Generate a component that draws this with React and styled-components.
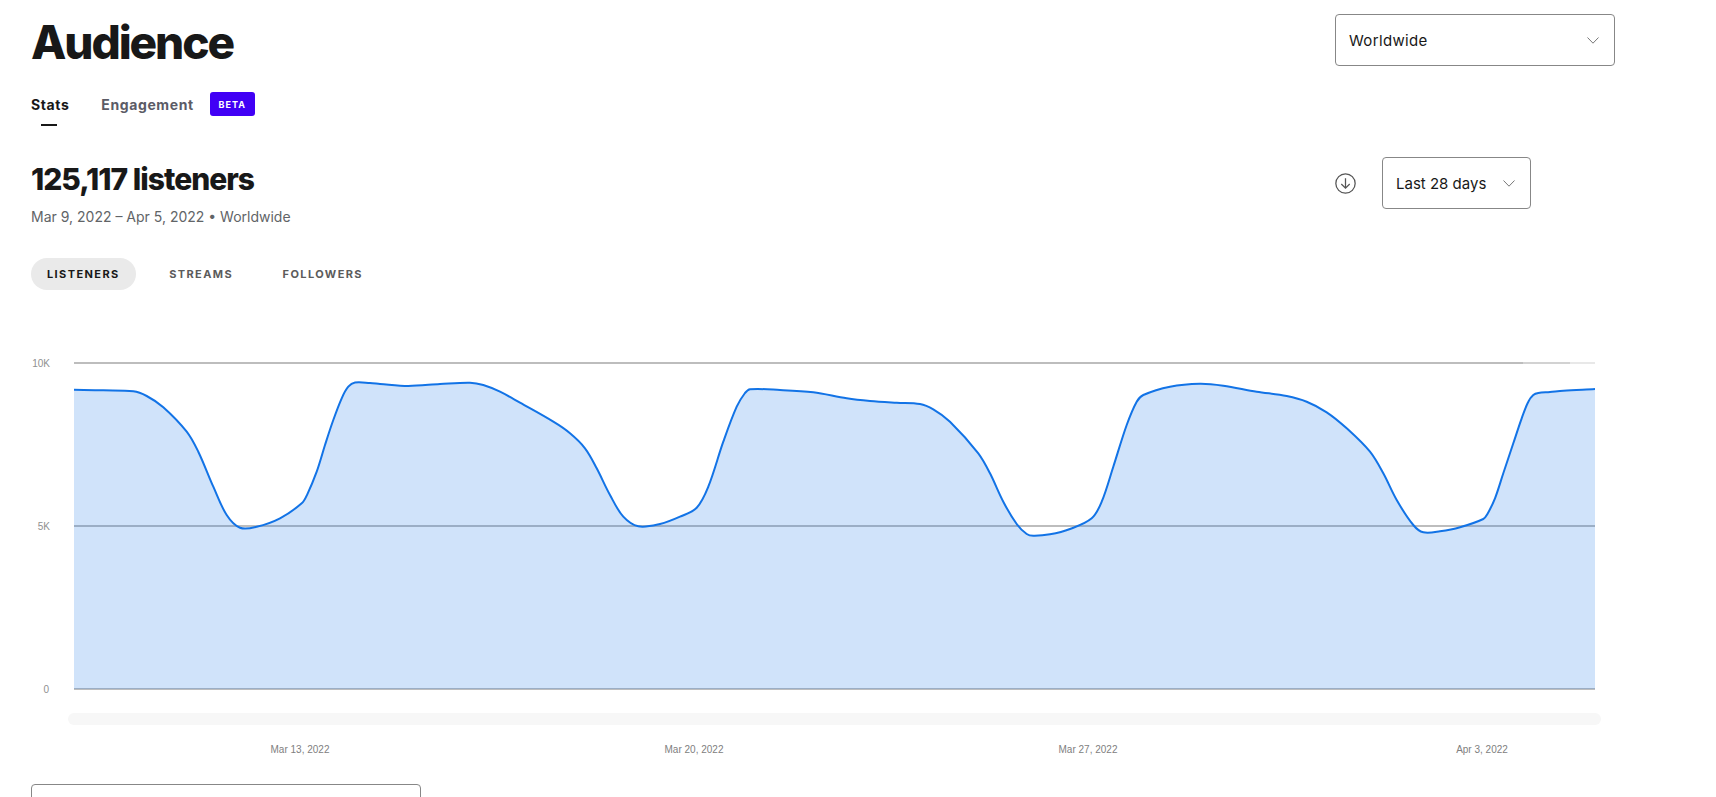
import React from "react";
import styled, { createGlobalStyle } from "styled-components";

// traced from the listeners curve, in page coordinates
const CURVE = [
	[74, 389.7], [103.3, 390.3], [133.3, 391.3], [146.7, 396], [163.3, 407.3], [186.7, 431.7], [198.3, 451.7],
	[213.3, 486.7], [226.7, 515], [240, 527.7], [256.7, 526.7], [280, 518.3], [301.7, 503.3], [307.3, 494.3],
	[316.7, 471.7], [325, 445], [333.3, 420], [341.7, 398.3], [348.3, 386.7], [355, 382.5], [370, 383], [380, 384],
	[408.3, 386], [440, 384], [470, 382.7],
	[483.3, 385], [500, 391.7], [520, 402.7], [553.3, 421.7], [570, 433.3], [585, 448.3], [596.7, 468.3],
	[610, 495], [623.3, 516.7], [638.3, 526.3], [660, 524], [680, 516.7], [696.7, 507.7], [708.3, 486.7],
	[723.3, 441.7], [736.7, 406.7], [745, 393], [750, 389.3], [780, 390], [813.3, 392.3], [846.7, 398.3],
	[870, 401], [896.7, 402.7], [920, 404], [933.3, 409.3], [950, 421.7], [978.3, 453.3], [990, 473.3],
	[1003.3, 501.7], [1016.7, 524], [1026.7, 534], [1033.3, 535.7], [1050, 534.3], [1070, 529], [1091.7, 518.3],
	[1101.7, 501.7], [1113.3, 466.7], [1126.7, 425], [1136.7, 401.7], [1143.3, 395], [1170, 386.7], [1200, 383.7],
	[1223.3, 385.7], [1256.7, 391.7], [1286.7, 396], [1306.7, 401.7], [1326.7, 412.3], [1346.7, 428.3],
	[1370, 451.7], [1383.3, 473.3], [1396.7, 500], [1413.3, 525], [1423.3, 532.3], [1440, 531.3], [1460, 527.3],
	[1483.3, 519], [1487.3, 514.3], [1495, 498.3], [1503.3, 473.3], [1513.3, 443.3], [1521.7, 418.3],
	[1528.3, 401.7], [1533.3, 395], [1538.3, 393], [1550, 392], [1563.3, 390.7], [1595, 389],
];

const tangent = (points, i) => {
	const a = points[i - 1] || points[i];
	const b = points[i + 1] || points[i];
	const len = Math.hypot(b[0] - a[0], b[1] - a[1]);
	return [(b[0] - a[0]) / len, (b[1] - a[1]) / len];
};

// handles scale with each segment so the tight corners don't flatten out
const smoothPath = (points) => {
	let d = `M${points[0][0]} ${points[0][1]}`;
	for (let i = 0; i < points.length - 1; i++) {
		const p1 = points[i];
		const p2 = points[i + 1];
		const t1 = tangent(points, i);
		const t2 = tangent(points, i + 1);
		const h = Math.hypot(p2[0] - p1[0], p2[1] - p1[1]) / 3;
		const c1x = p1[0] + t1[0] * h;
		const c1y = p1[1] + t1[1] * h;
		const c2x = p2[0] - t2[0] * h;
		const c2y = p2[1] - t2[1] * h;
		d += ` C${c1x.toFixed(1)} ${c1y.toFixed(1)} ${c2x.toFixed(1)} ${c2y.toFixed(1)} ${p2[0]} ${p2[1]}`;
	}
	return d;
};

const linePath = smoothPath(CURVE);
const areaPath = `${linePath} L1595 689 L74 689 Z`;

const Chevron = () => (
	<ChevronIcon viewBox="0 0 12 7" aria-hidden="true">
		<polyline points="0.5,0.5 6,6.2 11.5,0.5" />
	</ChevronIcon>
);

const App = () => {
	return (
		<Page>
			<GlobalStyle />
			<TopRow>
				<Title>Audience</Title>
				<Select $width={280} $tracking={0.35}>
					Worldwide
					<Chevron />
				</Select>
			</TopRow>

			<Tabs>
				<Tab $active>Stats</Tab>
				<Tab>Engagement</Tab>
				<Badge>BETA</Badge>
			</Tabs>

			<StatsRow>
				<div>
					<Listeners>125,117 listeners</Listeners>
					<DateRange>Mar 9, 2022 – Apr 5, 2022 • Worldwide</DateRange>
				</div>
				<Controls>
					<DownloadIcon viewBox="0 0 20 20" aria-hidden="true">
						<circle cx="10" cy="10" r="9.2" />
						<path d="M10 5v9.5M6 10.5l4 4 4-4" />
					</DownloadIcon>
					<Select $width={149}>
						Last 28 days
						<Chevron />
					</Select>
				</Controls>
			</StatsRow>

			<Pills>
				<Pill $active>LISTENERS</Pill>
				<Pill>STREAMS</Pill>
				<Pill>FOLLOWERS</Pill>
			</Pills>

			<Chart viewBox="31 350 1570 345">
				<GridLine d="M74 363H1523" />
				<GridLine d="M1523 363H1570" $shade="#d2d2d2" />
				<GridLine d="M1570 363H1595" $shade="#e8e8e8" />
				<GridLine d="M74 526H1595" />
				<GridLine d="M74 689H1595" />
				<Area d={areaPath} />
				<Line d={linePath} />
				<AxisLabel x="50" y="366.5">10K</AxisLabel>
				<AxisLabel x="50" y="530">5K</AxisLabel>
				<AxisLabel x="49" y="693">0</AxisLabel>
			</Chart>

			<Scrollbar />

			<DateAxis>
				<span>Mar 13, 2022</span>
				<span>Mar 20, 2022</span>
				<span>Mar 27, 2022</span>
				<span>Apr 3, 2022</span>
			</DateAxis>

			<BottomSelect />
		</Page>
	);
};

const GlobalStyle = createGlobalStyle`
	html, body {
		margin: 0;
		padding: 0;
		background: #fff;
		overflow: hidden;
	}
	body {
		font-family: "Inter", "Liberation Sans", sans-serif;
		color: #181818;
	}
`;

const Page = styled.div`
	height: 797px;
	overflow: hidden;
	padding-left: 31px;
	box-sizing: border-box;
`;

const TopRow = styled.div`
	display: flex;
	align-items: flex-start;
	justify-content: space-between;
	height: 92px;
	padding: 14px 101px 0 0;
	box-sizing: border-box;
`;

const Title = styled.h1`
	margin: 0;
	font-size: 46px;
	line-height: 56px;
	font-weight: 800;
	letter-spacing: -2.1px;
	color: #181818;
`;

const Select = styled.div`
	display: flex;
	align-items: center;
	justify-content: space-between;
	width: ${(props) => props.$width}px;
	height: 52px;
	padding: 0 15px 0 13px;
	box-sizing: border-box;
	border: 1px solid #878787;
	border-radius: 4px;
	font-size: 15px;
	letter-spacing: ${(props) => props.$tracking || 0}px;
	color: #181818;
`;

const ChevronIcon = styled.svg`
	width: 12px;
	height: 7px;
	fill: none;
	stroke: #777;
	stroke-width: 1;
`;

const Tabs = styled.div`
	display: flex;
	align-items: flex-start;
	height: 65px;
`;

const Tab = styled.div`
	position: relative;
	height: 24px;
	margin: 1px ${(props) => (props.$active ? "32px" : "16px")} 0 0;
	font-size: 14px;
	line-height: 24px;
	font-weight: 700;
	letter-spacing: 0.6px;
	color: ${(props) => (props.$active ? "#181818" : "#5b5b66")};

	&::after {
		content: "";
		display: ${(props) => (props.$active ? "block" : "none")};
		position: absolute;
		left: 10px;
		top: 31px;
		width: 16px;
		height: 2px;
		background: #181818;
	}
`;

const Badge = styled.div`
	display: flex;
	align-items: center;
	justify-content: center;
	width: 45px;
	height: 24px;
	border-radius: 3px;
	background: #4100f5;
	color: #fff;
	font-size: 9px;
	font-weight: 700;
	letter-spacing: 1px;
`;

const StatsRow = styled.div`
	display: flex;
	align-items: flex-start;
	justify-content: space-between;
	height: 101px;
	padding-right: 185px;
`;

const Listeners = styled.h2`
	margin: 0;
	font-size: 30px;
	line-height: 44px;
	font-weight: 800;
	letter-spacing: -1px;
	color: #181818;
`;

const DateRange = styled.div`
	margin-top: 6px;
	font-size: 14px;
	line-height: 20px;
	color: #616467;
`;

const Controls = styled.div`
	display: flex;
	align-items: center;
	gap: 26px;
`;

const DownloadIcon = styled.svg`
	width: 21px;
	height: 21px;
	fill: none;
	stroke: #555;
	stroke-width: 1.2;
`;

const Pills = styled.div`
	display: flex;
	align-items: center;
	gap: 17.5px;
	height: 32px;
`;

const Pill = styled.div`
	display: flex;
	align-items: center;
	height: 32px;
	padding: 0 16px;
	border-radius: 16px;
	background: ${(props) => (props.$active ? "#eaeaea" : "transparent")};
	color: ${(props) => (props.$active ? "#181818" : "#5b5b5b")};
	font-size: 11px;
	font-weight: 700;
	letter-spacing: 1.4px;
`;

const Chart = styled.svg`
	display: block;
	width: 1570px;
	height: 345px;
	margin-top: 60px;
`;

const GridLine = styled.path`
	fill: none;
	stroke: ${(props) => props.$shade || "#bdbdbd"};
	stroke-width: 2;
`;

const Area = styled.path`
	fill: rgba(18, 115, 230, 0.2);
`;

const Line = styled.path`
	fill: none;
	stroke: #1273e6;
	stroke-width: 2;
`;

const AxisLabel = styled.text`
	font-family: "Liberation Sans", Arial, sans-serif;
	font-size: 10px;
	fill: #8f8f8f;
	text-anchor: end;
`;

const Scrollbar = styled.div`
	width: 1533px;
	height: 12px;
	margin: 18px 0 0 37px;
	border-radius: 6px;
	background: #f7f7f7;
`;

const DateAxis = styled.div`
	display: grid;
	grid-template-columns: repeat(4, 394px);
	margin: 18px 0 0 72px;
	height: 14px;
	font-family: "Liberation Sans", Arial, sans-serif;
	font-size: 10px;
	line-height: 14px;
	color: #808080;
	text-align: center;
`;

const BottomSelect = styled.div`
	width: 390px;
	height: 52px;
	margin-top: 27px;
	box-sizing: border-box;
	border: 1px solid #878787;
	border-radius: 4px;
`;

export default App;
